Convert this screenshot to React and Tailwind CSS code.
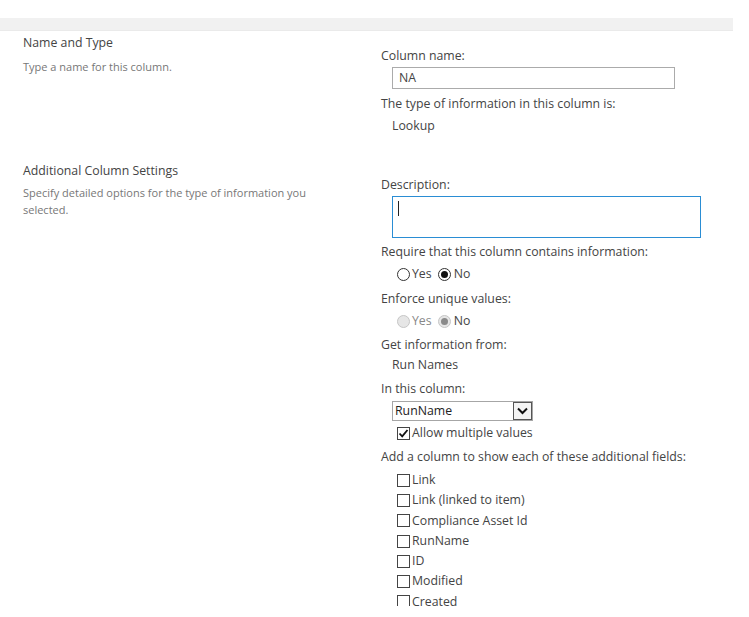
import React from 'react';

const fields = ['Link', 'Link (linked to item)', 'Compliance Asset Id', 'RunName', 'ID', 'Modified', 'Created'];

const Label = ({ children, className = '' }) => (
  <div className={`text-[12.3px] leading-[18px] text-[#444] ${className}`}>{children}</div>
);

const Radio = ({ checked, disabled }) => (
  <span
    className={`w-[13px] h-[13px] rounded-full border flex items-center justify-center ${
      disabled ? 'border-[#c6c6c6] bg-[#e6e6e6]' : 'border-[#333] bg-white'
    }`}
  >
    {checked && <span className={`w-[7px] h-[7px] rounded-full ${disabled ? 'bg-[#8a8a8a]' : 'bg-[#111]'}`} />}
  </span>
);

const Box = ({ checked }) => (
  <span className="w-[13px] h-[13px] border border-[#444] bg-white flex items-center justify-center shrink-0">
    {checked && (
      <svg width="11" height="11" viewBox="0 0 11 11">
        <path d="M1.5 5.5 L4.2 8.3 L9.5 2" fill="none" stroke="#111" strokeWidth="1.8" />
      </svg>
    )}
  </span>
);

const RadioRow = ({ disabled }) => (
  <div className={`ml-4 flex items-center h-[18px] text-[12.3px] ${disabled ? 'text-[#888]' : 'text-[#444]'}`}>
    <Radio disabled={disabled} />
    <span className="ml-[2px]">Yes</span>
    <span className="ml-[6px]"><Radio checked disabled={disabled} /></span>
    <span className="ml-[3px] text-[#444]">No</span>
  </div>
);

export default function App() {
  return (
    <div
      className="h-[606px] overflow-hidden bg-white"
      style={{ fontFamily: '"Segoe UI", "Open Sans", sans-serif' }}
    >
      <div className="h-[18px]" />
      <div className="w-[733px] h-[13px] bg-[#f1f1f1] border-b border-[#eaeaea]" />

      {/* Name and Type */}
      <div className="flex">
        <div className="w-[381px] shrink-0 pl-[23px] pt-[3px]">
          <Label>Name and Type</Label>
          <div className="mt-[7px] text-[11px] leading-[16px] text-[#777]">Type a name for this column.</div>
        </div>
        <div className="pt-[16px]">
          <Label>Column name:</Label>
          <div className="ml-[11px] mt-[2px] w-[283px] h-[22px] border border-[#ababab] px-[6px] text-[12.3px] leading-[20px] text-[#444]">
            NA
          </div>
          <Label className="mt-[6px]">The type of information in this column is:</Label>
          <Label className="ml-[11px] mt-[4px]">Lookup</Label>
        </div>
      </div>

      {/* Additional Column Settings */}
      <div className="flex">
        <div className="w-[381px] shrink-0 pl-[23px] pt-[27px]">
          <Label>Additional Column Settings</Label>
          <div className="mt-[4px] w-[300px] text-[11px] leading-[17px] text-[#777]">
            Specify detailed options for the type of information you selected.
          </div>
        </div>
        <div className="pt-[41px]">
          <Label>Description:</Label>
          <div className="ml-[11px] mt-[2px] w-[309px] h-[42px] border border-[#2a8dd4] px-[5px] pt-[4px]">
            <div className="w-px h-[15px] bg-[#222]" />
          </div>
          <Label className="mt-[5px]">Require that this column contains information:</Label>
          <div className="mt-[4px]"><RadioRow /></div>
          <Label className="mt-[7px]">Enforce unique values:</Label>
          <div className="mt-[4px]"><RadioRow disabled /></div>
          <Label className="mt-[6px]">Get information from:</Label>
          <Label className="ml-[11px] mt-[2px]">Run Names</Label>
          <Label className="mt-[6px]">In this column:</Label>
          <div className="ml-[11px] mt-[3px] w-[141px] h-[20px] border border-[#a6a6a6] flex items-stretch">
            <span className="flex-1 pl-[2px] text-[12.3px] leading-[18px] text-[#222]">RunName</span>
            <span className="w-[19px] border border-[#555] bg-[#f4f4f4] flex items-center justify-center">
              <svg width="11" height="8" viewBox="0 0 11 8">
                <path d="M1 1.5 L5.5 6 L10 1.5" fill="none" stroke="#111" strokeWidth="2" />
              </svg>
            </span>
          </div>
          <div className="ml-4 mt-[3px] flex items-center gap-[2px] h-[18px] text-[12.3px] text-[#444]">
            <Box checked />
            <span>Allow multiple values</span>
          </div>
          <Label className="mt-[6px]">Add a column to show each of these additional fields:</Label>
          <div className="mt-[4px] ml-4">
            {fields.map((f) => (
              <div key={f} className="flex items-center gap-[2px] h-[20.3px] text-[12.3px] text-[#444]">
                <Box />
                <span>{f}</span>
              </div>
            ))}
          </div>
        </div>
      </div>
    </div>
  );
}
